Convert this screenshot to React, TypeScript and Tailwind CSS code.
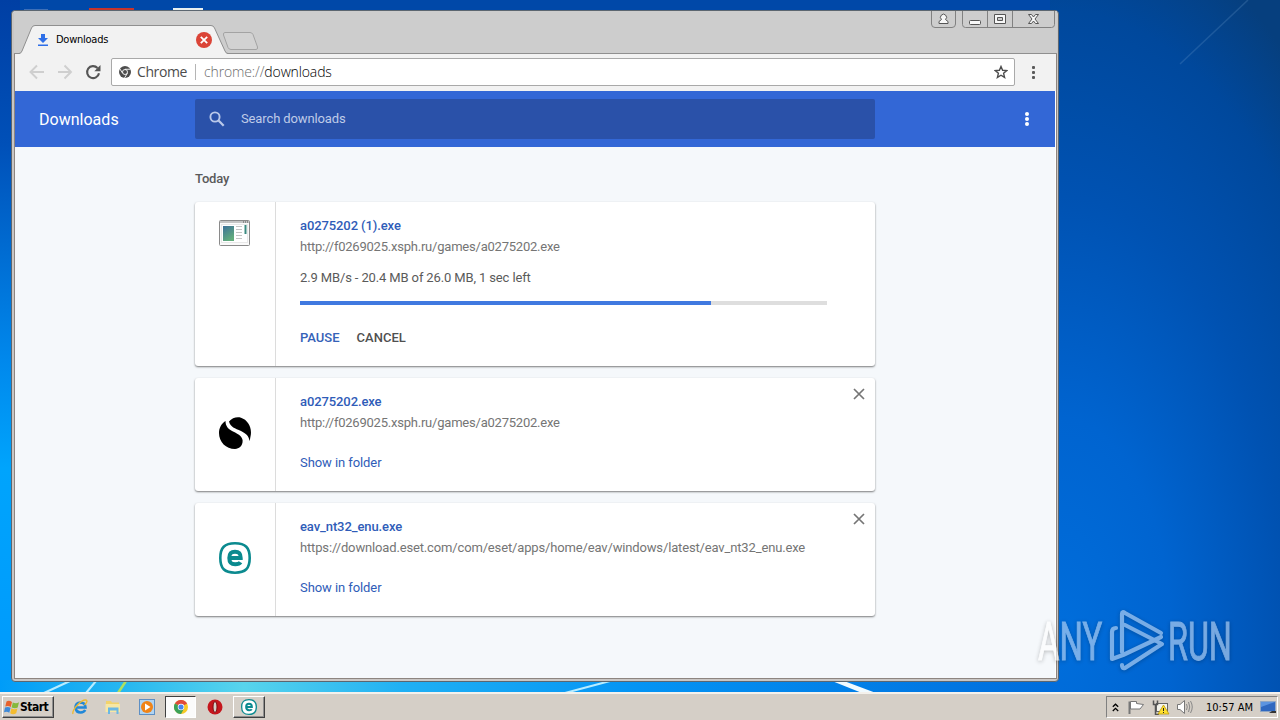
import type { ReactNode } from "react";

const ROBOTO = "font-[Roboto,sans-serif]";
const TAHOMA = "font-['DejaVu_Sans_Condensed','DejaVu_Sans',sans-serif]";

type Download = {
  name: string;
  url: string;
  urlTracking: string;
  icon: ReactNode;
  progress?: { text: string; percent: number };
};

function ExeIcon() {
  return (
    <svg width="32" height="32" viewBox="0 0 32 32">
      <defs>
        <linearGradient id="exe" x1="0" y1="0" x2="0.5" y2="1">
          <stop offset="0" stopColor="#3d7099" />
          <stop offset="1" stopColor="#62ad7c" />
        </linearGradient>
      </defs>
      <rect x="0.5" y="3.5" width="30" height="25" rx="1" fill="#fafafa" stroke="#8a8a8a" />
      <path d="M1 5h29" stroke="#c4c4c4" strokeWidth="2" />
      <path d="M24 5h1m1 0h1m1 0h1" stroke="#555" />
      <rect x="2.5" y="7.5" width="26" height="18" fill="#fff" stroke="#e8e8e8" />
      <rect x="4" y="9" width="11" height="15" fill="url(#exe)" />
      <path d="M17 9.5h6M17 12.5h6M17 15.5h6M17 18.5h6M17 21.5h6" stroke="#c4c4c4" />
      <path d="M26.5 8v9" stroke="#3a8b80" strokeWidth="2" />
    </svg>
  );
}

function SwirlIcon() {
  return (
    <svg width="32" height="32" viewBox="0 0 32 32">
      <path d="M10 4.5C13 1 18 -0.5 22 0.8C29 3 33.5 11 31.5 19.5C31 22 31 23 30.5 24C30 19 27 16.5 22 14C16 11.5 11.5 10 10 4.5Z" />
      <path d="M6.5 4C6.5 9 9 12 14 14.5C20 17.5 24.5 20 23.5 25.5C22.5 29.5 20.5 31.5 16 32C7 32 0 25 0 16C0 11 2.5 6.5 6.5 4Z" />
    </svg>
  );
}

function EsetIcon({ size = 32 }: { size?: number }) {
  return (
    <svg width={size} height={size} viewBox="0 0 32 32" fill="none" stroke="#0b8a8f">
      <path
        d="M16 1.3C26.5 1.3 30.7 5.5 30.7 16S26.5 30.7 16 30.7S1.3 26.5 1.3 16S5.5 1.3 16 1.3Z"
        fill="#fff"
        strokeWidth="2.6"
      />
      <path
        d="M10.5 16H21.7C21.7 11.5 20 9.7 16 9.7S10.3 11.5 10.3 16S12 22.3 16.2 22.3C18.5 22.3 20.5 22 21.5 20.3"
        strokeWidth="4"
      />
    </svg>
  );
}

const DOWNLOADS: Download[] = [
  {
    name: "a0275202 (1).exe",
    url: "http://f0269025.xsph.ru/games/a0275202.exe",
    urlTracking: "tracking-[-0.22px]",
    icon: <ExeIcon />,
    progress: { text: "2.9 MB/s - 20.4 MB of 26.0 MB, 1 sec left", percent: 78 },
  },
  {
    name: "a0275202.exe",
    url: "http://f0269025.xsph.ru/games/a0275202.exe",
    urlTracking: "tracking-[-0.22px]",
    icon: <SwirlIcon />,
  },
  {
    name: "eav_nt32_enu.exe",
    url: "https://download.eset.com/com/eset/apps/home/eav/windows/latest/eav_nt32_enu.exe",
    urlTracking: "tracking-[-0.15px]",
    icon: <EsetIcon />,
  },
];

function DownloadCard({ item }: { item: Download }) {
  const { progress } = item;

  return (
    <div
      className={`flex rounded-[3px] bg-white shadow-[0_1px_2px_rgba(0,0,0,0.5)] ${
        progress ? "h-[164px]" : "h-[113px]"
      }`}
    >
      <div
        className={`flex w-[81px] justify-center border-r border-[#dcdcdc] ${
          progress ? "pt-[15px]" : "items-center pb-[3px]"
        }`}
      >
        {item.icon}
      </div>
      <div className="flex-1 pt-[15px] pl-6 text-[13px] leading-[18px]">
        <div className="font-medium tracking-[-0.1px] text-[#2f5cb8]">{item.name}</div>
        <div className={`mt-[3px] text-[#757575] ${item.urlTracking}`}>{item.url}</div>
        {progress ? (
          <>
            <div className="mt-[13px] tracking-[-0.13px] text-[#5a5a5a]">{progress.text}</div>
            <div className="mt-[14px] h-1 w-[527px] bg-[#dedede]">
              <div className="h-full bg-[#4079e0]" style={{ width: `${progress.percent}%` }} />
            </div>
            <div className="mt-6 flex gap-[17px] font-medium">
              <button className="text-[#3562b8]">PAUSE</button>
              <button className="text-[#505050]">CANCEL</button>
            </div>
          </>
        ) : (
          <div className="mt-[22px] tracking-[-0.08px] text-[#2f5cb8]">Show in folder</div>
        )}
      </div>
      {!progress && (
        <svg className="mt-[10px] mr-[10px]" width="12" height="12" viewBox="0 0 12 12" stroke="#757575" strokeWidth="1.7">
          <path d="M1 1l10 10M11 1L1 11" />
        </svg>
      )}
    </div>
  );
}

function TabStrip() {
  return (
    <div className="flex h-[43px] justify-between border-b border-[#8f8f8f] bg-[#cdcdcd]">
      <div className="relative flex h-[42px] w-[260px] items-end">
        <svg className="absolute top-0 left-0" width="260" height="43" viewBox="2 0 260 43" fill="none">
          <path d="M7 43Q9 42.5 10 40L19.5 17Q20.5 14.5 23 14.5H199Q201.5 14.5 202.5 17L213 40Q214 43 216 43Z" fill="#f2f2f2" />
          <path d="M2 42.5H7Q9 42.5 10 40L19.5 17Q20.5 14.5 23 14.5H199Q201.5 14.5 202.5 17L213 40Q214 42.5 216 42.5H262" stroke="#8f8f8f" />
          <path d="M213 21.5H238Q240 21.5 241 23.5L245.5 36Q246 38.5 244 38.5H219Q217 38.5 216 36.5L211.5 24Q211 21.5 213 21.5Z" fill="#d2d2d2" stroke="#a3a3a3" />
        </svg>
        <div className="relative flex h-[26px] w-[198px] items-center pl-6">
          <svg width="10" height="12" viewBox="0 0 10 12" fill="#2e6fe8">
            <path d="M3 0H7V4H10L5 9L0 4H3ZM0 10.5H10V12H0Z" />
          </svg>
          <span className={`${TAHOMA} ml-2 text-[11px] tracking-[-0.25px] text-black`}>Downloads</span>
          <svg className="ml-auto" width="16" height="16" viewBox="0 0 16 16">
            <circle cx="8" cy="8" r="8" fill="#db4437" />
            <path d="M4.8 4.8l6.4 6.4M11.2 4.8l-6.4 6.4" stroke="#fff" strokeWidth="1.8" />
          </svg>
        </div>
      </div>
      <svg className="mr-[2px]" width="128" height="17" viewBox="0 0 128 17" fill="none" stroke="#818181">
        <path d="M4.5 0V13Q4.5 16.5 8 16.5H25Q28.5 16.5 28.5 13V0M35.5 0V13.5Q35.5 16.5 38.5 16.5H124.5Q127.5 16.5 127.5 13.5V0M60.5 0V16M85.5 0V16" />
        <g fill="#f7f7f7" stroke="#555">
          <rect x="42.5" y="9.5" width="11" height="4" rx="1" />
          <path d="M67.5 3.5h11v9h-11zM70.5 6.5h5v3h-5z" fillRule="evenodd" />
          <path d="M101.5 3.5h3l2 2.5 2-2.5h3l-3.5 4.5 3.5 4.5h-3l-2-2.5-2 2.5h-3l3.5-4.5z" />
          <path d="M12 12.5v-2l2.5-2a3 3 0 1 1 4 0l2.500 2v2z" />
        </g>
      </svg>
    </div>
  );
}

function Toolbar() {
  return (
    <div className="flex h-[37px] items-center bg-[#f2f2f2] pb-px">
      <svg className="ml-[14px]" width="72" height="16" viewBox="0 0 72 16" fill="none" strokeWidth="1.9">
        <path d="M15 8H2M8 1.5L1.5 8L8 14.5M29 8H42M35.5 1.5L42 8L35.5 14.5" stroke="#cfcfcf" />
        <path d="M68.5 4A6 6 0 1 0 70 9.2" stroke="#555" strokeWidth="2.1" />
        <path d="M71.5 1V7.2H65.3Z" fill="#555" />
      </svg>
      <div className="ml-[10px] flex h-7 w-[904px] items-center rounded-[2px] border border-[#a9a9a9] bg-white font-['Open_Sans','Noto_Sans',sans-serif] text-[14px]">
        <svg className="ml-[7px]" width="12" height="12" viewBox="0 0 24 24">
          <circle cx="12" cy="12" r="12" fill="#4d4d4d" />
          <circle cx="12" cy="12" r="5" fill="#4d4d4d" stroke="#fff" strokeWidth="1.8" />
          <path d="M12 6.5H23M7.2 14.5L2 6M16.8 14.5L11 24" stroke="#fff" strokeWidth="1.8" />
        </svg>
        <span className="ml-[6px] w-[50px] pb-px tracking-[-0.4px] whitespace-nowrap text-[#4c4c4c]">Chrome</span>
        <span className="ml-[8px] h-4 w-px bg-[#b5b5b5]" />
        <span className="ml-2 pb-px font-light tracking-[-0.13px] text-[#6c6c6c]">
          chrome://<span className="text-black">downloads</span>
        </span>
        <svg className="mr-[6px] ml-auto" width="14" height="14" viewBox="0 0 14 14" fill="none" stroke="#4c4c4c" strokeWidth="1.4">
          <path d="M7 1.5L8.6 5.3L12.8 5.6L9.6 8.3L10.6 12.4L7 10.2L3.4 12.4L4.4 8.3L1.2 5.6L5.4 5.3Z" />
        </svg>
      </div>
      <svg className="ml-[17px]" width="3" height="13" viewBox="0 0 3 13" fill="#5a5a5a">
        <rect width="3" height="3" rx="1" />
        <rect y="5" width="3" height="3" rx="1" />
        <rect y="10" width="3" height="3" rx="1" />
      </svg>
    </div>
  );
}

function PageHeader() {
  return (
    <div className={`${ROBOTO} flex h-14 items-center bg-[#3367d6]`}>
      <h1 className="w-[180px] pt-[2px] pl-6 text-[16px] tracking-[0.02px] text-white">Downloads</h1>
      <div className="flex h-10 w-[680px] items-center rounded-[2px] bg-[#2a51a9] pl-[14px]">
        <svg width="16" height="16" viewBox="0 0 16 16" fill="none" stroke="#b9c8ea">
          <circle cx="6" cy="6" r="4.6" strokeWidth="1.9" />
          <path d="M9.5 9.5L14.7 14.7" strokeWidth="2.3" />
        </svg>
        <span className="ml-4 text-[13px] tracking-[-0.12px] text-[#bfcbe8]">Search downloads</span>
      </div>
      <svg className="mr-[26px] ml-auto" width="4" height="14" viewBox="0 0 4 14" fill="#fff">
        <circle cx="2" cy="2" r="2" />
        <circle cx="2" cy="7" r="2" />
        <circle cx="2" cy="12" r="2" />
      </svg>
    </div>
  );
}

function BrowserWindow() {
  return (
    <div className="absolute top-[10px] left-[11px] flex h-[672px] w-[1048px] flex-col rounded-[4px] border border-[#5c6670] bg-[#c9c6c4] pr-px pb-[2px] pl-[2px] shadow-[inset_0_1px_0_#e4e4e4]">
      <TabStrip />
      <div className="flex flex-1 flex-col border-x border-b border-[#8d8580] bg-[#f5f8fb]">
        <Toolbar />
        <div className="flex flex-1 flex-col border-r border-white">
          <PageHeader />
          <main className={`${ROBOTO} ml-[180px] w-[680px]`}>
            <h2 className="pt-[23px] text-[13px] leading-[18px] font-medium tracking-[-0.15px] text-[#5a5a5a]">
              Today
            </h2>
            <div className="mt-[14px] flex flex-col gap-3">
              {DOWNLOADS.map((item) => (
                <DownloadCard key={item.name} item={item} />
              ))}
            </div>
          </main>
        </div>
      </div>
    </div>
  );
}

function Wallpaper() {
  return (
    <svg className="absolute inset-0" width="1280" height="720" viewBox="0 0 1280 720">
      <defs>
        <linearGradient id="sky" x1="0" y1="0" x2="0" y2="1">
          <stop offset="0" stopColor="#003fa4" />
          <stop offset="0.2" stopColor="#0050b8" />
          <stop offset="0.5" stopColor="#0088ec" />
          <stop offset="0.65" stopColor="#00a4fc" />
          <stop offset="1" stopColor="#0098fc" />
        </linearGradient>
        <radialGradient
          id="glow"
          gradientUnits="userSpaceOnUse"
          cx="0"
          cy="0"
          r="1"
          gradientTransform="translate(1060 640) scale(370 740)"
        >
          <stop offset="0" stopColor="#006edc" />
          <stop offset="0.3" stopColor="#0064d0" />
          <stop offset="0.6" stopColor="#0052b2" />
          <stop offset="0.85" stopColor="#00489c" />
          <stop offset="1" stopColor="#063f7e" />
        </radialGradient>
        <linearGradient id="ground" x1="0" y1="0" x2="1" y2="0">
          <stop offset="0" stopColor="#009cf8" />
          <stop offset="0.12" stopColor="#28b8f0" />
          <stop offset="0.23" stopColor="#58d4ec" />
          <stop offset="0.38" stopColor="#20b0f4" />
          <stop offset="0.6" stopColor="#0494f4" />
          <stop offset="1" stopColor="#006cdc" />
        </linearGradient>
      </defs>
      <rect width="1280" height="720" fill="url(#sky)" />
      <rect x="20" width="1040" height="12" fill="#0048a8" />
      <rect x="1050" width="230" height="720" fill="url(#glow)" />
      <path d="M1180 64L1248 0" stroke="#6c9ccc" strokeOpacity="0.25" strokeWidth="1.5" />
      <rect y="680" width="1060" height="14" fill="url(#ground)" />
      <path d="M44 693L70 681M86 693L96 681M565 693L610 681" stroke="#b8ecff" strokeWidth="2" />
      <path d="M118 693L126 681" stroke="#b0e060" strokeWidth="2.5" />
      <path d="M844 681L876 693H862L832 681Z" fill="#f0faff" />
      {/* tops of the desktop icons peeking out above the window */}
      <path d="M24 10H48" stroke="#7c98c8" />
      <rect x="89" y="8" width="45" height="3" fill="#c8342c" />
      <rect x="173" y="8" width="30" height="3" fill="#e8f0f0" />
    </svg>
  );
}

function Watermark() {
  return (
    <svg
      className="absolute top-[606px] left-[1034px] opacity-60 drop-shadow-[0_1px_2px_rgba(0,0,0,0.4)]"
      width="220"
      height="70"
      viewBox="0 0 220 70"
    >
      <g fill="#c8dcf4" stroke="#c8dcf4" strokeWidth="1" fontFamily="Roboto, sans-serif" fontSize="53">
        <text transform="translate(4 54) scale(0.62 1)">
          <tspan fill="#fff" stroke="#fff">A</tspan>NY
        </text>
        <text transform="translate(134 54) scale(0.61 1)">RUN</text>
      </g>
      <g fill="none" stroke="#c8dcf4" strokeWidth="4.2" strokeLinejoin="round" strokeLinecap="round">
        <path d="M82 22Q78 22 78 26V53L89 49L127 31" />
        <path d="M88 46V8Q88 5 91 7L127 27" />
        <path d="M91 19L128 38L91 62Q88 63 88 59" />
      </g>
    </svg>
  );
}

function StartFlag() {
  return (
    <svg width="16" height="15" viewBox="0 0 16 15">
      <path d="M2.5 1.5Q5 0 8 2L6.8 7Q4 5.2 1.3 6.6Z" fill="#e8622c" />
      <path d="M8.8 2.4Q12 4 15 2.3L13.7 7.5Q11 9 7.6 7.4Z" fill="#86b83c" />
      <path d="M1 7.4Q4 6.2 6.6 7.8L5.3 12.8Q3 11 0 12.2Z" fill="#3f8ad8" />
      <path d="M7.4 8.3Q10.5 10 13.4 8.4L12.2 13.3Q9 15 6.2 13.3Z" fill="#f4bc30" />
    </svg>
  );
}

function ChromeIcon() {
  return (
    <svg width="14" height="14" viewBox="0 0 24 24">
      <circle cx="12" cy="12" r="12" fill="#f6c926" />
      <path d="M12 12L1.6 6A12 12 0 0 1 22.4 6Z" fill="#df4a3b" />
      <path d="M1.6 6A12 12 0 0 0 12 24L17 15L12 12Z" fill="#3ba158" />
      <circle cx="12" cy="12" r="5.6" fill="#fff" />
      <circle cx="12" cy="12" r="4.4" fill="#4585ee" />
    </svg>
  );
}

function QuickLaunch() {
  return (
    <>
      <svg className="ml-[18px]" width="16" height="16" viewBox="0 0 16 16" fill="none">
        <path d="M3.5 8.5H13.5Q13.2 3.5 8.5 3.5Q3.5 3.8 3.5 8.5Q4 13.5 8.7 13.5Q12 13.4 13.2 11" stroke="#2188d8" strokeWidth="2.6" />
        <path d="M1 15Q0 12 5 6.5Q11 0 14.5 1.2Q16 2.5 12.5 6" stroke="#edb92e" strokeWidth="1.3" />
      </svg>
      <svg className="ml-[17px]" width="16" height="16" viewBox="0 0 16 16">
        <path d="M1 2h5l1 1.5h7V12H1z" fill="#f2d36c" />
        <path d="M0.5 5h14.5v8H0.5z" fill="#f7e7a4" />
        <path d="M3 15V8.5h10.5V15h-2v-3.5H5V15z" fill="#6bb8e4" />
      </svg>
      <svg className="ml-[18px]" width="16" height="16" viewBox="0 0 16 16">
        <rect x="0.5" y="0.5" width="15" height="15" fill="#b0d4f2" stroke="#5d8fc4" />
        <circle cx="8" cy="8" r="6" fill="#f08418" />
        <path d="M6 4.5L11.5 8L6 11.5Z" fill="#fff" />
      </svg>
    </>
  );
}

function Tray() {
  return (
    <div className="ml-auto flex h-[22px] w-[172px] items-center border border-t-[#808080] border-r-white border-b-white border-l-[#808080] pl-[5px]">
      <svg width="7" height="9" viewBox="0 0 7 9" fill="none" stroke="#000" strokeWidth="1.3">
        <path d="M0.8 3.8L3.5 1.2L6.2 3.8M0.8 8L3.5 5.4L6.2 8" />
      </svg>
      <svg className="ml-[9px]" width="66" height="16" viewBox="0 0 66 16">
        <path d="M1.5 2.5V15" stroke="#777" strokeWidth="2" />
        <path d="M2.5 2.5H8.5V4.5L15.5 5.5L12 10H2.5Z" fill="#fff" stroke="#777" />
        <rect x="28.5" y="4.5" width="11" height="8" fill="#f4f4ec" stroke="#666" />
        <path d="M25.5 1.5v4h4v-4M27.5 6V15.5H31" fill="none" stroke="#555" strokeWidth="1.5" />
        <path d="M35.5 6L41 15H30Z" fill="#ffe02e" stroke="#bd9b08" strokeWidth="0.8" />
        <path d="M35.5 9v3m0 1v1" stroke="#222" />
        <path d="M49.5 5.5H52L56.5 1.5V14.5L52 10.5H49.5Z" fill="#fff" stroke="#777" />
        <path d="M58.5 5Q60 8 58.5 11M60.5 3Q63 8 60.5 13M62.5 2Q66 8 62.5 14" fill="none" stroke="#888" />
      </svg>
      <span className={`${TAHOMA} ml-[12px] w-[49px] pt-[2px] text-[11px] whitespace-nowrap`}>10:57 AM</span>
      <svg className="ml-[5px]" width="16" height="14" viewBox="0 0 16 14">
        <path d="M0.5 1.5H15.5V11.5H0.5Z" fill="#2f68c0" stroke="#8fa6c4" />
        <path d="M1 2H15L1 7Z" fill="#5c94e0" />
        <path d="M9 13H16V11H12Z" fill="#333" />
      </svg>
    </div>
  );
}

function Taskbar() {
  return (
    <div className="absolute bottom-0 left-0 flex h-[28px] w-full items-center border-t-2 border-[#f4f1ec] bg-[#d5cfc7] pr-[2px]">
      <button
        className={`${TAHOMA} ml-[2px] flex h-[22px] w-[52px] items-center border border-t-white border-r-[#404040] border-b-[#404040] border-l-white pl-px text-[12px] font-bold tracking-[-0.5px] shadow-[inset_-1px_-1px_#909090]`}
      >
        <StartFlag />
        <span>Start</span>
      </button>
      <QuickLaunch />
      <div className="ml-[10px] flex h-[22px] w-[31px] items-center justify-center border border-t-[#404040] border-r-white border-b-white border-l-[#404040] bg-[#fbfbfb]">
        <ChromeIcon />
      </div>
      <svg className="ml-[11px]" width="16" height="16" viewBox="0 0 16 16">
        <circle cx="8" cy="8" r="7.5" fill="#c5161d" />
        <ellipse cx="8" cy="8" rx="2" ry="5.5" fill="#d5cfc7" stroke="#7d0a10" />
      </svg>
      <div className="ml-[10px] flex h-[22px] w-[32px] items-center justify-center border border-t-white border-r-[#404040] border-b-[#404040] border-l-white shadow-[inset_-1px_-1px_#909090]">
        <EsetIcon size={16} />
      </div>
      <Tray />
    </div>
  );
}

export default function App() {
  return (
    <div className="relative h-[720px] w-[1280px] overflow-hidden">
      <Wallpaper />
      <BrowserWindow />
      <Taskbar />
      <Watermark />
    </div>
  );
}
